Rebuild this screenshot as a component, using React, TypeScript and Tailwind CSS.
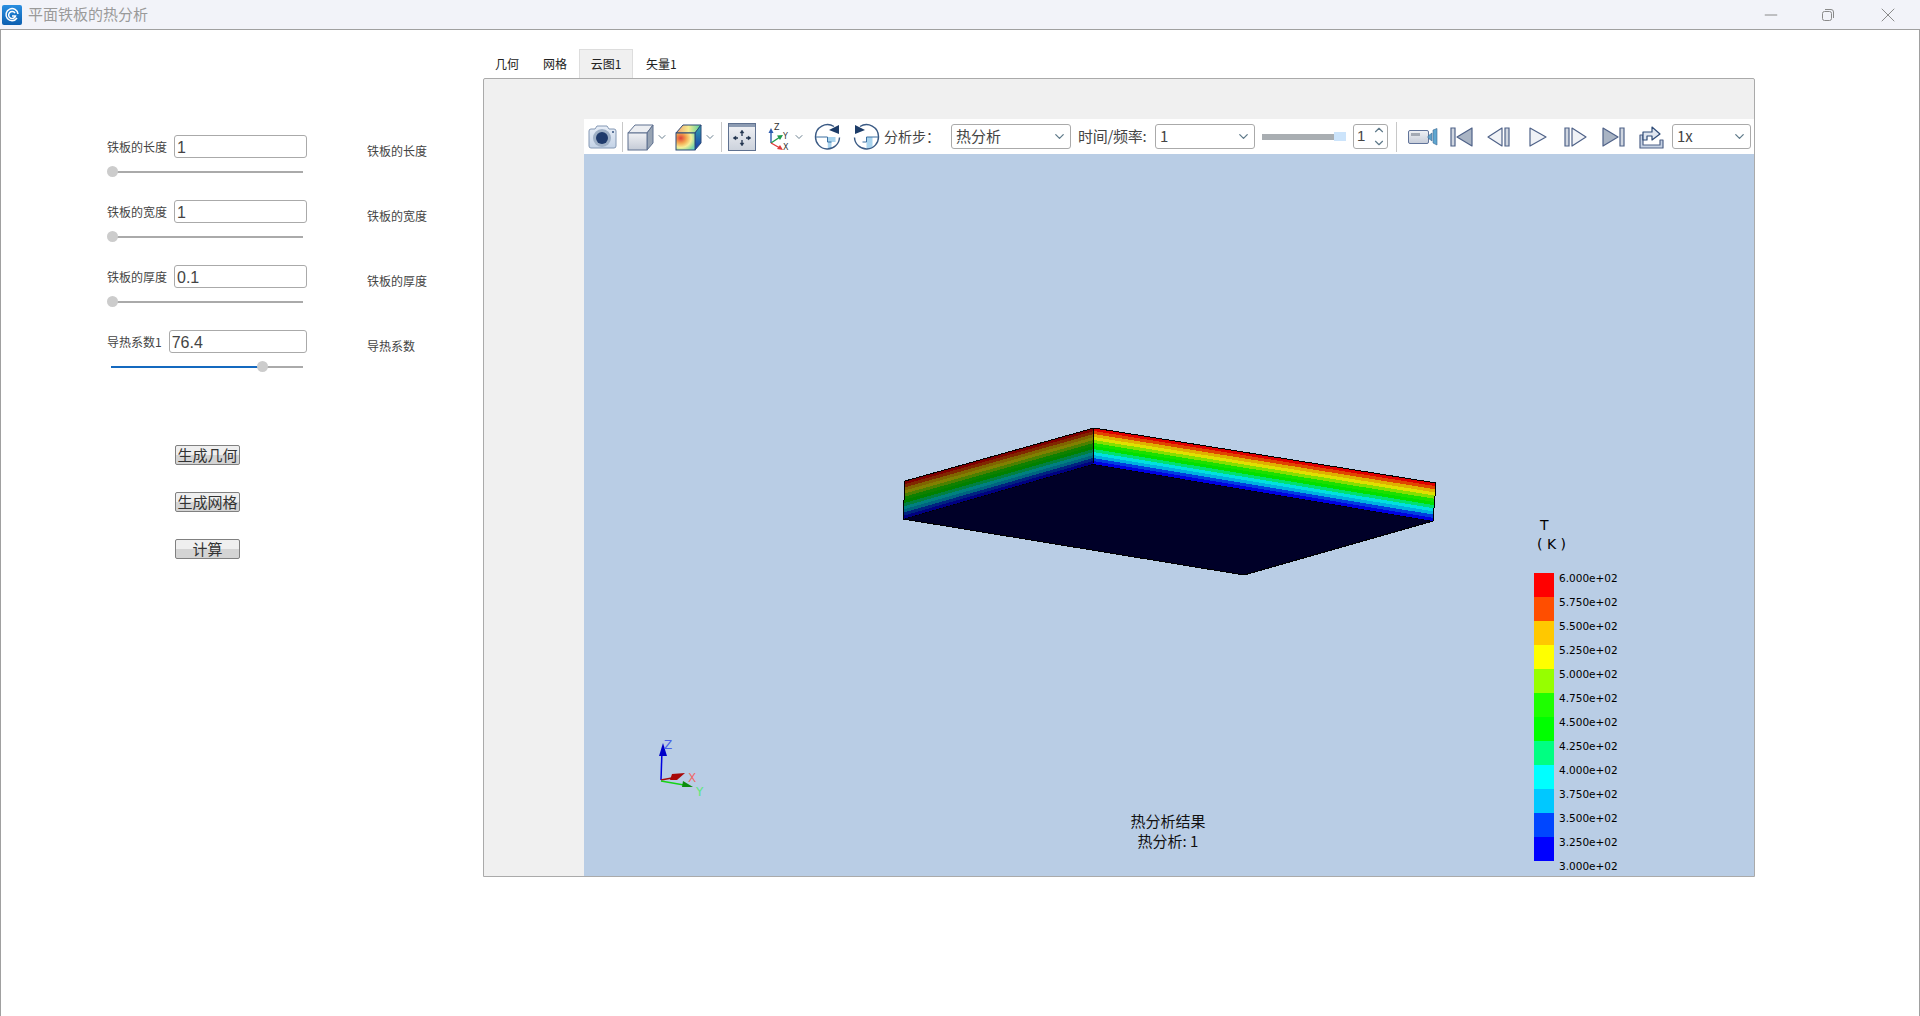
import React from "react";
import { ChevronDown, ChevronUp, Minus, X } from "lucide-react";

const CJK = "font-['Noto_Sans_CJK_SC','Noto_Sans',sans-serif]";
const LATIN = "font-['Liberation_Sans','Noto_Sans_CJK_SC',sans-serif]";

const params = [
  { label: "铁板的长度", value: "1", note: "铁板的长度", fill: 0 },
  { label: "铁板的宽度", value: "1", note: "铁板的宽度", fill: 0 },
  { label: "铁板的厚度", value: "0.1", note: "铁板的厚度", fill: 0 },
  { label: "导热系数1", value: "76.4", note: "导热系数", fill: 151 },
];

const bands = [
  [255, 0, 0],
  [255, 78, 0],
  [255, 200, 0],
  [255, 255, 0],
  [150, 255, 0],
  [30, 255, 0],
  [0, 255, 0],
  [0, 255, 130],
  [0, 255, 255],
  [0, 200, 255],
  [0, 70, 255],
  [0, 0, 255],
];

const legend = [
  "6.000e+02",
  "5.750e+02",
  "5.500e+02",
  "5.250e+02",
  "5.000e+02",
  "4.750e+02",
  "4.500e+02",
  "4.250e+02",
  "4.000e+02",
  "3.750e+02",
  "3.500e+02",
  "3.250e+02",
  "3.000e+02",
];

const legendColors = [
  "bg-[#ff0000]",
  "bg-[#ff4e00]",
  "bg-[#ffc800]",
  "bg-[#ffff00]",
  "bg-[#96ff00]",
  "bg-[#1eff00]",
  "bg-[#00ff00]",
  "bg-[#00ff82]",
  "bg-[#00ffff]",
  "bg-[#00c8ff]",
  "bg-[#0046ff]",
  "bg-[#0000ff]",
];

type P = [number, number];

// one wall of the plate, cut into the 12 colour bands from top to bottom
function Wall({ a, b, c, d, shade }: { a: P; b: P; c: P; d: P; shade: number }) {
  const lerp = (p: P, q: P, t: number) => `${p[0] + (q[0] - p[0]) * t},${p[1] + (q[1] - p[1]) * t}`;
  return (
    <>
      {bands.map((rgb, i) => (
        <polygon
          key={i}
          points={`${lerp(a, d, i / 12)} ${lerp(b, c, i / 12)} ${lerp(b, c, (i + 1) / 12)} ${lerp(a, d, (i + 1) / 12)}`}
          fill={`rgb(${rgb[0] * shade},${rgb[1] * shade},${rgb[2] * shade})`}
        />
      ))}
    </>
  );
}

function Plate() {
  return (
    <svg className="absolute inset-0 h-full w-full" viewBox="584 154 1170 722">
      <g shapeRendering="crispEdges">
        <polygon points="903,519 1093,464 1433,521 1244,575" fill="#000028" stroke="#000" />
        <Wall a={[905, 481]} b={[1094, 428]} c={[1093, 464]} d={[903, 519]} shade={0.5} />
        <Wall a={[1094, 428]} b={[1436, 483]} c={[1433, 521]} d={[1093, 464]} shade={0.88} />
        <polyline points="903,519 905,481 1094,428 1436,483 1433,521" fill="none" stroke="#000" />
        <line x1="1094" y1="428" x2="1093" y2="464" stroke="#000" />
      </g>
      {/* axis triad */}
      <line x1="661" y1="780" x2="662" y2="750" stroke="#0000e0" strokeWidth="1.5" />
      <polygon points="663,743 659,756 667,756" fill="#0000c8" />
      <polygon points="672,774 685,773 677,780 670,780" fill="#a80808" />
      <line x1="661" y1="780" x2="672" y2="778" stroke="#a80808" strokeWidth="1.5" />
      <line x1="661" y1="781" x2="684" y2="785" stroke="#14d414" strokeWidth="1.5" />
      <polygon points="683,781 693,787 682,787" fill="#0c8c0c" />
      <text x="664" y="749" fontSize="12" fill="#4a62e8" fontFamily="DejaVu Sans">Z</text>
      <text x="688" y="782" fontSize="12" fill="#f06a6a" fontFamily="DejaVu Sans">X</text>
      <text x="696" y="796" fontSize="12" fill="#5ce87a" fontFamily="DejaVu Sans">Y</text>
    </svg>
  );
}

function Legend() {
  return (
    <div className="absolute left-[950px] top-[362px] flex flex-col text-black">
      <div className="ml-[6px] h-[57px] text-[14px] leading-[19px] font-['DejaVu_Sans',sans-serif]">
        <div>T</div>
        <div className="-ml-[3px]">( K )</div>
      </div>
      <div className="flex">
        <div className="flex w-[20px] flex-col">
          {legendColors.map((c) => (
            <div key={c} className={`h-[24px] ${c}`} />
          ))}
        </div>
        <div className="-mt-[7px] ml-[5px] flex flex-col">
          {legend.map((t) => (
            <div key={t} className="h-[24px] text-[10.5px] leading-[24px] font-['DejaVu_Sans',sans-serif]">
              {t}
            </div>
          ))}
        </div>
      </div>
    </div>
  );
}

function Slider({ fill }: { fill: number }) {
  return (
    <div className="relative mt-[8px] flex h-[11px] items-center pl-[4px] pr-[4px]">
      <div className="h-[2px] w-full bg-[#aaaaaa]">
        <div className="h-[2px] bg-[#1469bf]" style={{ width: fill }} />
      </div>
      <div
        className="absolute top-0 h-[11px] w-[11px] rounded-full bg-[#cccccc]"
        style={{ left: fill === 0 ? 0 : fill - 1 }}
      />
    </div>
  );
}

function ParamRow({ label, value, note, fill }: (typeof params)[number]) {
  return (
    <div className="flex h-[65px]">
      <div className="w-[200px]">
        <div className="flex h-[23px] items-center gap-[7px]">
          <span className={`mt-[1px] text-[12px] text-[#444] ${CJK}`}>{label}</span>
          <input
            readOnly
            value={value}
            className={`h-[23px] min-w-0 flex-1 rounded-[3px] border border-[#aaaaaa] px-[2px] pt-[2px] text-[16px] text-[#444] outline-none ${LATIN}`}
          />
        </div>
        <Slider fill={fill} />
      </div>
      <div className={`ml-[60px] mt-[8px] text-[12px] leading-[16px] text-[#444] ${CJK}`}>{note}</div>
    </div>
  );
}

function ActionButton({ children }: { children: React.ReactNode }) {
  return (
    <button
      className={`flex h-[20px] w-[65px] items-center justify-center rounded-[2px] border border-[#808080] bg-[linear-gradient(#efefef_50%,#d4d4d4_50%)] text-[15px] leading-[18px] text-[#333] ${CJK}`}
    >
      {children}
    </button>
  );
}

function Dropdown({ text, width, ml }: { text: string; width: string; ml: string }) {
  return (
    <div
      className={`flex h-[25px] items-center justify-between rounded-[3px] border border-[#aaaaaa] pl-[4px] pr-[3px] text-[15px] text-[#444] ${width} ${ml} ${CJK}`}
    >
      <span>{text}</span>
      <ChevronDown size={15} strokeWidth={2} className="text-[#5f7a8a]" />
    </div>
  );
}

const Sep = ({ ml }: { ml: string }) => <div className={`h-[30px] w-px bg-[#c8c8c8] ${ml}`} />;

const Chevron = ({ ml }: { ml: string }) => (
  <ChevronDown size={12} strokeWidth={2} className={`text-[#6a7f8f] ${ml}`} />
);

function CameraIcon() {
  return (
    <svg width="29" height="26" viewBox="0 0 29 26" className="ml-[4px]">
      <defs>
        <linearGradient id="cam" x1="0" y1="0" x2="0" y2="1">
          <stop offset="0" stopColor="#e8eef7" />
          <stop offset="1" stopColor="#c3d2e6" />
        </linearGradient>
      </defs>
      <path d="M1 7a2 2 0 0 1 2-2h4l2-3h10l2 3h5a2 2 0 0 1 2 2v15a2 2 0 0 1-2 2H3a2 2 0 0 1-2-2z" fill="url(#cam)" stroke="#8498b4" />
      <circle cx="14" cy="14" r="9" fill="#9fb0c6" />
      <circle cx="14" cy="14" r="6" fill="#1f3a6b" />
      <circle cx="25" cy="8" r="1" fill="#33527f" />
    </svg>
  );
}

function CubeIcon() {
  return (
    <svg width="28" height="28" viewBox="0 0 28 28" className="ml-[4px]">
      <defs>
        <linearGradient id="cubeFront" x1="0" y1="0" x2="0" y2="1">
          <stop offset="0" stopColor="#f0f1f4" />
          <stop offset="1" stopColor="#c4cad6" />
        </linearGradient>
      </defs>
      <polygon points="1,10 8,2 26,2 20,10" fill="#eceef2" stroke="#5f7190" />
      <polygon points="20,10 26,2 26,20 20,27" fill="#98a4b4" stroke="#5f7190" />
      <rect x="1" y="10" width="19" height="17" fill="url(#cubeFront)" stroke="#5f7190" />
    </svg>
  );
}

function ColorCubeIcon() {
  return (
    <svg width="28" height="28" viewBox="0 0 28 28" className="ml-[7px]">
      <defs>
        <radialGradient id="heat" cx="0.25" cy="0.3" r="1">
          <stop offset="0" stopColor="#e0403a" />
          <stop offset="0.3" stopColor="#f4a850" />
          <stop offset="0.55" stopColor="#f6ee98" />
          <stop offset="0.8" stopColor="#88d8a0" />
          <stop offset="1" stopColor="#58c8dc" />
        </radialGradient>
        <linearGradient id="heatTop" x1="0" y1="0" x2="1" y2="0">
          <stop offset="0" stopColor="#f0a070" />
          <stop offset="0.5" stopColor="#f6ec90" />
          <stop offset="1" stopColor="#50d0a0" />
        </linearGradient>
        <linearGradient id="heatSide" x1="0" y1="0" x2="0" y2="1">
          <stop offset="0" stopColor="#30a8b0" />
          <stop offset="1" stopColor="#1838a8" />
        </linearGradient>
      </defs>
      <polygon points="1,10 8,2 26,2 20,10" fill="url(#heatTop)" stroke="#2c4a78" />
      <polygon points="20,10 26,2 26,20 20,27" fill="url(#heatSide)" stroke="#2c4a78" />
      <rect x="1" y="10" width="19" height="17" fill="url(#heat)" stroke="#2c4a78" />
    </svg>
  );
}

function FitIcon() {
  return (
    <svg width="28" height="28" viewBox="0 0 28 28" className="ml-[6px]">
      <defs>
        <linearGradient id="fitBg" x1="0" y1="0" x2="0" y2="1">
          <stop offset="0" stopColor="#f2f3f6" />
          <stop offset="1" stopColor="#ccd2dc" />
        </linearGradient>
      </defs>
      <rect x="0.5" y="0.5" width="27" height="27" fill="url(#fitBg)" stroke="#5f7190" />
      <rect x="1" y="1" width="26" height="3" fill="#8c9bb2" />
      <g stroke="#22344f" strokeWidth="1.3" fill="#22344f">
        <path d="M14 9v4M14 17v4M6 15h4M18 15h4" fill="none" />
        <path d="M14 7l-2 3h4zM14 23l-2-3h4zM5 15l3-2v4zM23 15l-3-2v4z" strokeWidth="0.4" />
      </g>
    </svg>
  );
}

function AxesIcon() {
  return (
    <svg width="22" height="28" viewBox="0 0 22 28" className="ml-[12px]">
      <line x1="3" y1="20" x2="3" y2="9" stroke="#2c5cb0" strokeWidth="1.4" />
      <polygon points="3,5 0.5,10 5.5,10" fill="#2c5cb0" />
      <line x1="3" y1="20" x2="12" y2="14" stroke="#1e9a4a" strokeWidth="1.4" />
      <polygon points="15,12 9,12.5 12,17" fill="#1e9a4a" />
      <line x1="3" y1="20" x2="12" y2="25" stroke="#e03a3a" strokeWidth="1.4" />
      <polygon points="15,27 9,26 12,22" fill="#e03a3a" />
      <text x="6" y="7" fontSize="8" fill="#333" fontFamily="DejaVu Sans">Z</text>
      <text x="15" y="16" fontSize="8" fill="#333" fontFamily="DejaVu Sans">Y</text>
      <text x="15" y="27" fontSize="8" fill="#333" fontFamily="DejaVu Sans">X</text>
    </svg>
  );
}

function RotateIcon({ flip, ml }: { flip?: boolean; ml: string }) {
  return (
    <svg width="27" height="27" viewBox="0 0 27 27" className={`${ml} ${flip ? "-scale-x-100" : ""}`}>
      <path d="M13.5 14v12a12 12 0 0 0 4-.7V19h4v-5z" fill={flip ? "#fff" : "#a9d4ee"} />
      <path d="M13.5 14v12a12 12 0 0 1-6-1.600V14z" fill={flip ? "#a9d4ee" : "#fff"} />
      <path d="M1.500 14h12v5h4" stroke="#3a6ea0" strokeWidth="1" fill="none" />
      <path d="M20 3.500A12 12 0 0 0 1.500 13.500a12 12 0 0 0 24 1" fill="none" stroke="#3a5a84" strokeWidth="1.400" />
      <polygon points="25,2 25,11 15,7" fill="#1d3c68" />
    </svg>
  );
}

function VideoIcon() {
  return (
    <svg width="30" height="18" viewBox="0 0 30 18" className="ml-[11px]">
      <defs>
        <linearGradient id="vid" x1="0" y1="0" x2="0" y2="1">
          <stop offset="0" stopColor="#f0f2f5" />
          <stop offset="1" stopColor="#c6ccd8" />
        </linearGradient>
      </defs>
      <rect x="0.5" y="2.500" width="20" height="13" rx="1.500" fill="url(#vid)" stroke="#61749a" />
      <rect x="3" y="5" width="9" height="3" fill="#a4aab4" />
      <polygon points="20,8 24,5 24,13 20,10" fill="#61a0c8" stroke="#3c6890" strokeWidth="0.6" />
      <polygon points="25,2 29,0.5 29,17 25,15" fill="#5ea6d0" stroke="#3c6890" strokeWidth="0.6" />
    </svg>
  );
}

// the player glyphs share one gradient style: a triangle and sometimes a bar
function PlayerIcon({ tri, bar, w, ml, dark }: { tri: string; bar?: string; w: number; ml: string; dark?: boolean }) {
  return (
    <svg width={w} height="22" viewBox={`0 0 ${w} 22`} className={ml}>
      <polygon points={tri} fill={dark ? "#a9b4c4" : "#f0f2f6"} stroke="#4f6288" strokeWidth="1.2" strokeLinejoin="round" />
      {bar && <path d={bar} fill="#d0d6e0" stroke="#4f6288" strokeWidth="1.2" />}
    </svg>
  );
}

function ExportIcon() {
  return (
    <svg width="25" height="24" viewBox="0 0 25 24" className="ml-[14px]">
      <path d="M1 10v13h23v-8h-3v5H4V10z" fill="#c6d2e4" stroke="#4f6288" strokeWidth="1.2" strokeLinejoin="round" />
      <path d="M4 15V7h9V2l8 7-8 6v-4H8v4z" fill="#dfe6f0" stroke="#2f4c78" strokeWidth="1.2" strokeLinejoin="round" />
    </svg>
  );
}

function Toolbar() {
  return (
    <div className="flex h-[35px] items-center bg-white">
      <CameraIcon />
      <Sep ml="ml-[5px]" />
      <CubeIcon />
      <Chevron ml="ml-[1px]" />
      <ColorCubeIcon />
      <Chevron ml="ml-[1px]" />
      <Sep ml="ml-[5px]" />
      <FitIcon />
      <AxesIcon />
      <Chevron ml="ml-[3px]" />
      <RotateIcon ml="ml-[9px]" />
      <RotateIcon flip ml="ml-[12px]" />
      <span className={`ml-[4px] w-[67px] text-[14px] text-[#444] ${CJK}`}>分析步：</span>
      <Dropdown text="热分析" width="w-[120px]" ml="" />
      <span className={`ml-[7px] w-[70px] whitespace-nowrap text-[15px] tracking-[-0.3px] text-[#444] ${CJK}`}>时间/频率:</span>
      <Dropdown text="1" width="w-[100px]" ml="ml-[7px]" />
      <div className="ml-[7px] flex h-[10px] w-[84px] items-center">
        <div className="h-[6px] flex-1 bg-[#a9aeb2]" />
        <div className="h-[9px] w-[12px] bg-[#cce4fb]" />
      </div>
      <div className={`ml-[7px] flex h-[25px] w-[35px] items-center justify-between rounded-[3px] border border-[#aaaaaa] pl-[3px] pr-[1px] text-[15px] text-[#444] ${LATIN}`}>
        <span>1</span>
        <div className="flex flex-col text-[#5f7a8a]">
          <ChevronUp size={14} className="-mb-[1px]" />
          <ChevronDown size={14} />
        </div>
      </div>
      <Sep ml="ml-[8px]" />
      <VideoIcon />
      <PlayerIcon w={23} ml="ml-[12px]" tri="7,11 22,2 22,20" bar="M1 2h4v18H1z" dark />
      <PlayerIcon w={23} ml="ml-[14px]" tri="1,11 15,2 15,20" bar="M18 2h4v18h-4z" />
      <PlayerIcon w={18} ml="ml-[19px]" tri="1,2 17,11 1,20" />
      <PlayerIcon w={23} ml="ml-[17px]" tri="8,2 22,11 8,20" bar="M1 2h4v18H1z" />
      <PlayerIcon w={23} ml="ml-[15px]" tri="1,2 16,11 1,20" bar="M18 2h4v18h-4z" dark />
      <ExportIcon />
      <Dropdown text="1x" width="w-[79px]" ml="ml-[8px]" />
    </div>
  );
}

export default function App() {
  return (
    <div className={`flex h-[1016px] w-[1920px] flex-col overflow-hidden bg-white ${CJK}`}>
      {/* Title bar */}
      <div className="flex h-[30px] items-center border-b border-[#a0a0a0] bg-[#f2f3f9]">
        <svg width="20" height="20" viewBox="0 0 20 20" className="ml-[2px]">
          <defs>
            <linearGradient id="logo" x1="0" y1="0" x2="0" y2="1">
              <stop offset="0" stopColor="#2a8ee0" />
              <stop offset="1" stopColor="#0c5fb0" />
            </linearGradient>
          </defs>
          <rect width="20" height="20" rx="2" fill="url(#logo)" />
          <path d="M15 13a6 6 0 1 1 1-4M13 8a3.500 3.500 0 1 0 .5 3H10" fill="none" stroke="#fff" strokeWidth="1.500" />
        </svg>
        <span className="ml-[6px] text-[15px] text-[#9a9a9a]">平面铁板的热分析</span>
        <div className="ml-auto flex items-center text-[#8a8a8a]">
          <Minus size={20} strokeWidth={1.2} className="mr-[40px]" />
          <svg width="14" height="14" viewBox="0 0 14 14" className="mr-[41px]">
            <rect x="1.500" y="3.500" width="9" height="9" rx="2" fill="none" stroke="currentColor" />
            <path d="M4 1.500h6a2.500 2.500 0 0 1 2.500 2.500v6" fill="none" stroke="currentColor" />
          </svg>
          <X size={24} strokeWidth={1} className="mr-[20px]" />
        </div>
      </div>

      <div className="flex flex-1 border-x border-[#a0a0a0]">
        {/* Parameter column */}
        <div className="w-[482px] pl-[106px] pt-[105px]">
          {params.map((p) => (
            <ParamRow key={p.label} {...p} />
          ))}
          <div className="ml-[68px] mt-[50px] flex flex-col gap-[27px]">
            <ActionButton>生成几何</ActionButton>
            <ActionButton>生成网格</ActionButton>
            <ActionButton>计算</ActionButton>
          </div>
        </div>

        {/* Result tabs */}
        <div className="w-[1272px] pt-[19px]">
          <div className="flex h-[29px] items-stretch pl-[12px] text-[12px] text-[#222]">
            <div className="flex w-[24px] items-center">几何</div>
            <div className="ml-[24px] flex w-[24px] items-center">网格</div>
            <div className="ml-[12px] flex w-[54px] items-center justify-center border border-b-0 border-[#dddddd] bg-[#f0f0f0]">云图1</div>
            <div className="ml-[13px] flex items-center">矢量1</div>
          </div>
          <div className="h-[799px] rounded-t-[2px] border border-[#aaaaaa] bg-[#f0f0f0] pl-[100px] pt-[40px]">
            <Toolbar />
            <div className="relative h-[722px] bg-[#b9cde5]">
              <Plate />
              <Legend />
              <div className="absolute left-[534px] top-[657px] w-[100px] text-center text-[15px] leading-[20px] text-[#111]">
                <div>热分析结果</div>
                <div>热分析: 1</div>
              </div>
            </div>
          </div>
        </div>
      </div>
    </div>
  );
}
